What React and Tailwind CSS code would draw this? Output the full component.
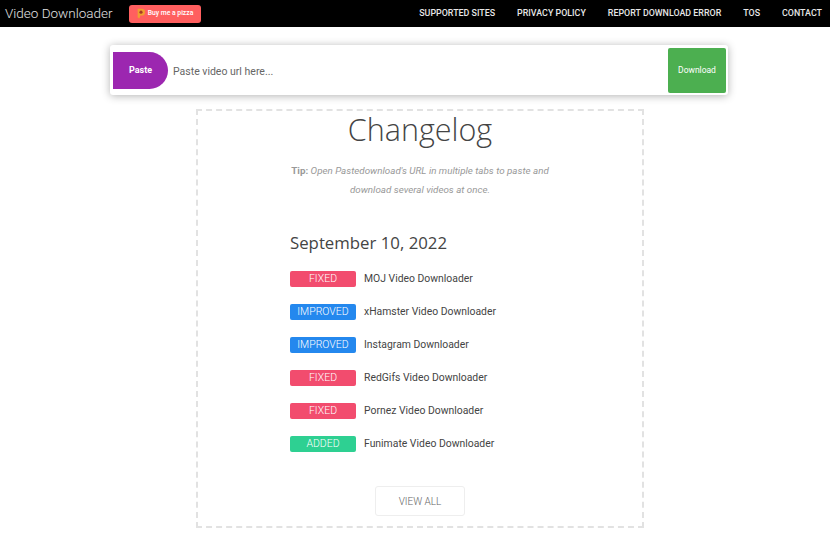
const navLinks = ['SUPPORTED SITES', 'PRIVACY POLICY', 'REPORT DOWNLOAD ERROR', 'TOS', 'CONTACT'];

const changes = [
  { tag: 'FIXED', color: 'bg-[#f24c6e]', name: 'MOJ Video Downloader' },
  { tag: 'IMPROVED', color: 'bg-[#2488ee]', name: 'xHamster Video Downloader' },
  { tag: 'IMPROVED', color: 'bg-[#2488ee]', name: 'Instagram Downloader' },
  { tag: 'FIXED', color: 'bg-[#f24c6e]', name: 'RedGifs Video Downloader' },
  { tag: 'FIXED', color: 'bg-[#f24c6e]', name: 'Pornez Video Downloader' },
  { tag: 'ADDED', color: 'bg-[#2ed092]', name: 'Funimate Video Downloader' },
];

const PizzaIcon = () => (
  <svg viewBox="0 0 12 16" className="w-[8px] h-[11px] shrink-0">
    <path d="M1 1 H7 A5 5 0 0 1 7 11 H5 L3.5 15.5 L1 14 Z" fill="#f0a030" />
    <circle cx="6" cy="6" r="2.4" fill="#a63a24" />
  </svg>
);

const App = () => {
  return (
    <div className="w-[830px] h-[539px] overflow-hidden bg-white font-['Roboto',sans-serif]">
      <header className="h-[27px] bg-black flex items-center justify-between pl-[5px] pr-[8px]">
        <div className="flex items-center">
          <span className="w-[124px] text-[13.5px] font-light text-[#e2e2e2] leading-none">Video Downloader</span>
          <a className="w-[72px] h-[18px] bg-[#ff5f5f] rounded-[3px] flex items-center justify-center gap-[3px] text-white text-[6.8px] font-medium">
            <PizzaIcon />
            Buy me a pizza
          </a>
        </div>
        <nav className="flex items-center gap-[22px]">
          {navLinks.map((link) => (
            <a key={link} className="text-[8.9px] font-medium text-[#e6e6e6] leading-none">{link}</a>
          ))}
        </nav>
      </header>

      <div className="mt-[18px] ml-[110px] w-[618px] h-[50px] bg-white rounded-[3px] shadow-[0_1px_8px_rgba(0,0,0,0.3)] flex items-center pl-[3px] pr-[2px]">
        <button className="w-[55px] h-[37px] pt-[2px] bg-[#9c27b0] rounded-r-full rounded-l-[2px] text-white text-[9px] font-bold">Paste</button>
        <span className="ml-[5px] pt-[3px] flex-1 text-[10.5px] text-[#666]">Paste video url here...</span>
        <button className="w-[58px] h-[45px] bg-[#4caf50] rounded-[2px] text-white text-[8.5px]">Download</button>
      </div>

      <main className="mt-[14px] ml-[196px] w-[448px] h-[419px] border-2 border-dashed border-[#e2e2e2] flex flex-col items-center">
        <h1 className="-mt-[3px] text-[30.5px] leading-[42px] font-light text-[#444] font-['Open_Sans',sans-serif]">Changelog</h1>
        <p className="mt-[11px] w-[270px] text-center text-[9.8px] leading-[19px] italic text-[#999]">
          <b className="not-italic font-bold">Tip:</b> Open Pastedownload's URL in multiple tabs to paste and download several videos at once.
        </p>

        <div className="w-[260px]">
          <h2 className="mt-[31px] text-[16.8px] leading-[26px] text-[#444] font-['Open_Sans',sans-serif]">September 10, 2022</h2>
          <ul className="mt-[15px] flex flex-col gap-[17px]">
            {changes.map((item) => (
              <li key={item.name} className="flex items-center h-[16px] whitespace-nowrap">
                <span className={`w-[66px] h-[16px] rounded-[2px] flex items-center justify-center text-white text-[10.5px] font-light ${item.color}`}>{item.tag}</span>
                <span className="ml-[8px] text-[10.4px] text-[#444]">{item.name}</span>
              </li>
            ))}
          </ul>
        </div>

        <button className="mt-[34px] w-[90px] h-[30px] border border-[#eee] rounded-[3px] text-[10px] font-light text-[#666]">VIEW ALL</button>
      </main>
    </div>
  );
};

export default App;
